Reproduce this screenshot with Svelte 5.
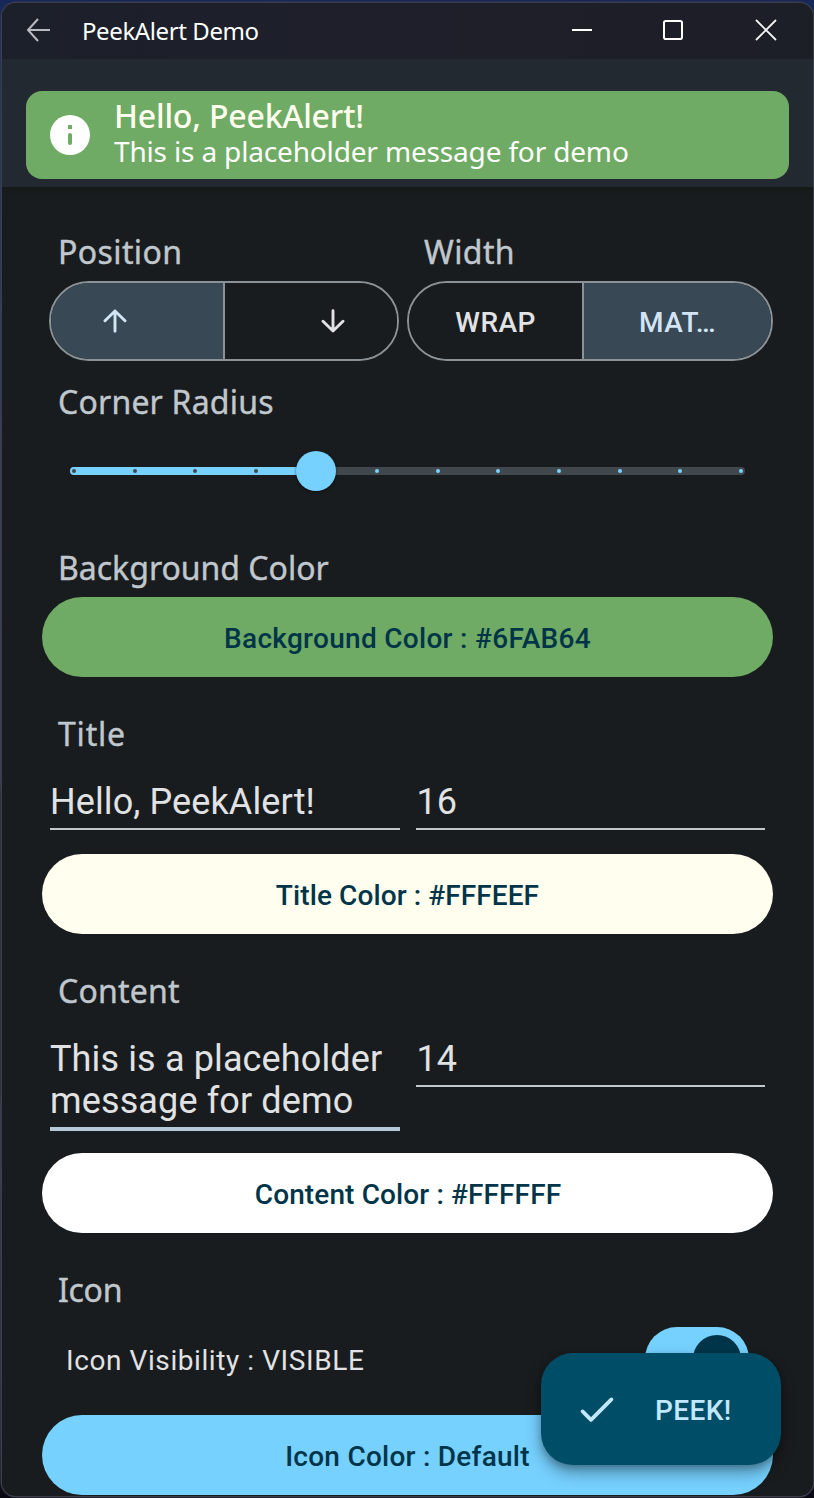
<script>
  const ticks = Array.from({ length: 12 }, (_, i) => i);
  const level = 4;
</script>

<div class="desktop">
  <div class="window">
    <header class="titlebar">
      <svg class="back" width="26" height="26" viewBox="0 0 26 26" fill="none" stroke="#b9bac2" stroke-width="2"><path d="M26 13H4M14 2L4 13l10 11" /></svg>
      <span class="apptitle">PeekAlert Demo</span>
      <svg class="min" width="22" height="22" viewBox="0 0 22 22"><path d="M1 11h20" stroke="#fff" stroke-width="2" /></svg>
      <svg class="max" width="22" height="22" viewBox="0 0 22 22"><rect x="2" y="2" width="18" height="18" rx="1.8" fill="none" stroke="#fff" stroke-width="2" /></svg>
      <svg class="close" width="22" height="22" viewBox="0 0 22 22"><path d="M1 1l20 20M21 1L1 21" stroke="#f4f4f4" stroke-width="1.8" /></svg>
    </header>

    <div class="band">
      <div class="alert">
        <svg width="40" height="40" viewBox="0 0 40 40">
          <circle cx="20" cy="20" r="20" fill="#fff" />
          <path d="M18 10h4v4h-4z" fill="#6fab64" />
          <rect x="18" y="18" width="4" height="12" rx="2" fill="#6fab64" />
        </svg>
        <div class="message">
          <div class="mtitle">Hello, PeekAlert!</div>
          <div class="mbody">This is a placeholder message for demo</div>
        </div>
      </div>
    </div>

    <main>
      <div class="options">
        <section class="position">
          <h2 class="loose">Position</h2>
          <div class="toggle">
            <button class="on up" aria-label="Top"><svg width="24" height="24" viewBox="0 0 24 24" fill="none" stroke="#d3e5f5" stroke-width="2.9" stroke-linecap="round" stroke-linejoin="round"><path d="M12 2V22.2M2 11.8L12 2l10 9.8" /></svg></button>
            <button class="down" aria-label="Bottom"><svg width="24" height="24" viewBox="0 0 24 24" fill="none" stroke="#e1e2e4" stroke-width="2.9" stroke-linecap="round" stroke-linejoin="round"><path d="M12 1.8v20.2M2 12.2L12 22l10-9.8" /></svg></button>
          </div>
        </section>
        <section class="width">
          <h2 class="loose">Width</h2>
          <div class="toggle">
            <button class="wrap"><span>WRAP</span></button>
            <button class="on match"><span>MAT…</span></button>
          </div>
        </section>
      </div>

      <h2 class="corner">Corner Radius</h2>
      <div class="slider">
        <div class="track">
          <div class="fill" style:width="{4 + (level * 667) / 11}px"></div>
          {#each ticks as i}
            <i class:lit={i > level} style:left="{2 + (i * 667) / 11}px"></i>
          {/each}
          <div class="thumb" style:left="{3.5 + (level * 667) / 11}px"></div>
        </div>
      </div>

      <h2 class="background">Background Color</h2>
      <button class="pill green"><span>Background Color : #6FAB64</span></button>

      <h2 class="gap title">Title</h2>
      <div class="fields">
        <div class="field"><span>Hello, PeekAlert!</span></div>
        <div class="field number"><span>16</span></div>
      </div>
      <button class="pill cream"><span>Title Color : #FFFEEF</span></button>

      <h2 class="gap">Content</h2>
      <div class="fields content">
        <div class="field focus"><span>This is a placeholder<br />message for demo</span></div>
        <div class="field number"><span>14</span></div>
      </div>
      <button class="pill white"><span>Content Color : #FFFFFF</span></button>

      <h2 class="gap icon">Icon</h2>
      <div class="visibility">
        <span>Icon Visibility : VISIBLE</span>
        <div class="switch"><div class="knob"></div></div>
      </div>
      <button class="pill sky"><span>Icon Color : Default</span></button>
    </main>

    <button class="fab">
      <svg width="36" height="28" viewBox="0 0 36 28" fill="none" stroke="#c2e8ff" stroke-width="3.8" stroke-linecap="round" stroke-linejoin="round"><path d="M3.6 15.4l8.4 8.4L32.4 3.4" /></svg>
      <span>PEEK!</span>
    </button>
  </div>
</div>

<style>
  :global(body) { margin: 0; background: #10141f; }
  * { box-sizing: border-box; }
  .desktop {
    height: 1498px;
    padding: 3px 1px 2px 2px;
    overflow: hidden;
    background: linear-gradient(180deg, #17275a 0, #24386c 15%, #36415f 30%, #3c435c 52%, #2c2c2d 53%, #2c2c2d 73%, #3c3f55 74%, #292b38 95%, #080913 100%);
  }
  .window {
    position: relative;
    height: 1493px;
    border-radius: 14px;
    overflow: hidden;
    background: #191c1e;
    box-shadow: 0 0 0 1.5px #3a3d4b;
  }
  .titlebar {
    height: 56px;
    display: flex;
    align-items: center;
    padding: 0 36px 2px 22px;
    background: linear-gradient(90deg, #1c202b, #1e1f2a 50%, #1d1f27);
  }
  .apptitle { flex: 1; margin-left: 32px; padding-top: 2px; font: 24px/34px "Noto Sans", sans-serif; letter-spacing: -0.4px; color: #fff; white-space: nowrap; }
  .back, .min, .max, .close { flex: none; }
  .max { margin-left: 69px; }
  .close { margin-left: 71px; }
  .band { height: 128px; padding: 32px 24px 8px; background: #222931; }
  .alert {
    height: 88px;
    border-radius: 16px;
    background: #6fab64;
    display: flex;
    align-items: center;
    padding: 0 24px;
    gap: 24px;
  }
  .message { white-space: nowrap; font-family: "Noto Sans", sans-serif; padding-bottom: 6px; }
  .mtitle { font-size: 32px; line-height: 38px; font-weight: 500; letter-spacing: -0.18px; color: #fffeef; }
  .mbody { font-size: 28px; line-height: 32px; letter-spacing: -0.16px; color: #fff; }
  main { padding: 41px 40px 0; font-family: Roboto, sans-serif; background: linear-gradient(180deg, #16191a, #191c1e 9px); }
  h2 { margin: 0; padding-left: 16px; height: 48px; font: 400 32px/48px "Noto Sans", sans-serif; -webkit-text-stroke: 0.4px #c0c7cd; letter-spacing: 0.2px; color: #c0c7cd; white-space: nowrap; }
  h2.loose { letter-spacing: 0.4px; }
  h2.background { letter-spacing: 0; }
  h2.title { letter-spacing: 0.8px; }
  h2.icon { letter-spacing: -0.3px; }
  button { margin: 0; border: 0; padding: 0; font: 500 28px/40px Roboto, sans-serif; display: flex; align-items: center; justify-content: center; white-space: nowrap; }
  .options { display: flex; }
  .position { width: 366px; padding-right: 9px; }
  .position .toggle { margin-left: 7px; }
  .width { flex: 1; }
  .toggle { height: 80px; margin-top: 5px; border: 2px solid #8b9297; border-radius: 40px; overflow: hidden; display: flex; }
  .width .toggle { margin-left: -1px; }
  .toggle button { height: 76px; background: #191c1e; color: #e1e2e4; letter-spacing: 0.4px; padding-top: 4px; }
  .toggle .on { background: #384955; color: #d3e5f5; }
  .toggle .up { width: 172px; padding: 0 44px 0 0; }
  .toggle .down { flex: 1; border-left: 2px solid #8b9297; padding: 0 0 0 44px; }
  .toggle .wrap { width: 173px; }
  .toggle .match { flex: 1; border-left: 2px solid #8b9297; }
  .corner { margin-top: 17px; }
  .slider { height: 118px; padding: 41px 28px 0; }
  .track { position: relative; height: 8px; border-radius: 4px; background: #41484d; }
  .fill { height: 8px; border-radius: 4px; background: #76d1ff; }
  .track i { position: absolute; top: 2px; width: 4px; height: 4px; border-radius: 2px; background: #41484d; }
  .track i.lit { background: #76d1ff; }
  .thumb { position: absolute; top: -16px; width: 40px; height: 40px; margin-left: -20px; border-radius: 20px; background: #76d1ff; box-shadow: 0 1px 3px #0008; }
  .pill { width: 100%; height: 80px; border-radius: 40px; color: #003549; padding-top: 4px; letter-spacing: 0.3px; }
  h2 + .pill { margin-top: 5px; }
  .green { background: #6fab64; }
  .cream { background: #fffeef; letter-spacing: 0.1px; }
  .white { background: #fff; letter-spacing: 0.12px; padding-left: 1px; }
  .sky { background: #76d1ff; letter-spacing: 0.25px; }
  .gap { margin-top: 33px; }
  .fields { display: grid; grid-template-columns: 350px 349px; gap: 16px; height: 96px; padding: 23px 8px 0; align-items: start; }
  .fields.content { height: 138px; }
  .field { min-width: 0; border-bottom: 2px solid #c0c7cd; padding-bottom: 5px; font-size: 36px; line-height: 42px; letter-spacing: 0.1px; color: #e1e2e4; white-space: nowrap; }
  .field.number { letter-spacing: 0.1px; padding-left: 0.5px; }
  .field.focus { border-bottom: 4px solid #b5c9d7; letter-spacing: 0.13px; }
  .visibility { height: 101px; display: flex; justify-content: space-between; align-items: center; padding: 0 24px 11px; font-size: 28px; line-height: 40px; color: #e1e2e4; letter-spacing: 0.58px; }
  .visibility span { padding-top: 4px; }
  .switch { width: 104px; height: 64px; border-radius: 32px; background: #76d1ff; display: flex; justify-content: flex-end; padding: 8px; }
  .knob { width: 48px; height: 48px; border-radius: 24px; background: #003549; }
  .fab {
    position: absolute; right: 32px; bottom: 31px;
    width: 240px; height: 112px; border-radius: 32px;
    background: #004d67; color: #c2e8ff;
    justify-content: flex-start; padding: 2px 0 0 38px; gap: 40px;
    letter-spacing: 0.4px;
    box-shadow: 0 8px 16px #0005, 0 3px 6px #0003;
  }
  .fab span { padding-top: 2px; }
</style>
